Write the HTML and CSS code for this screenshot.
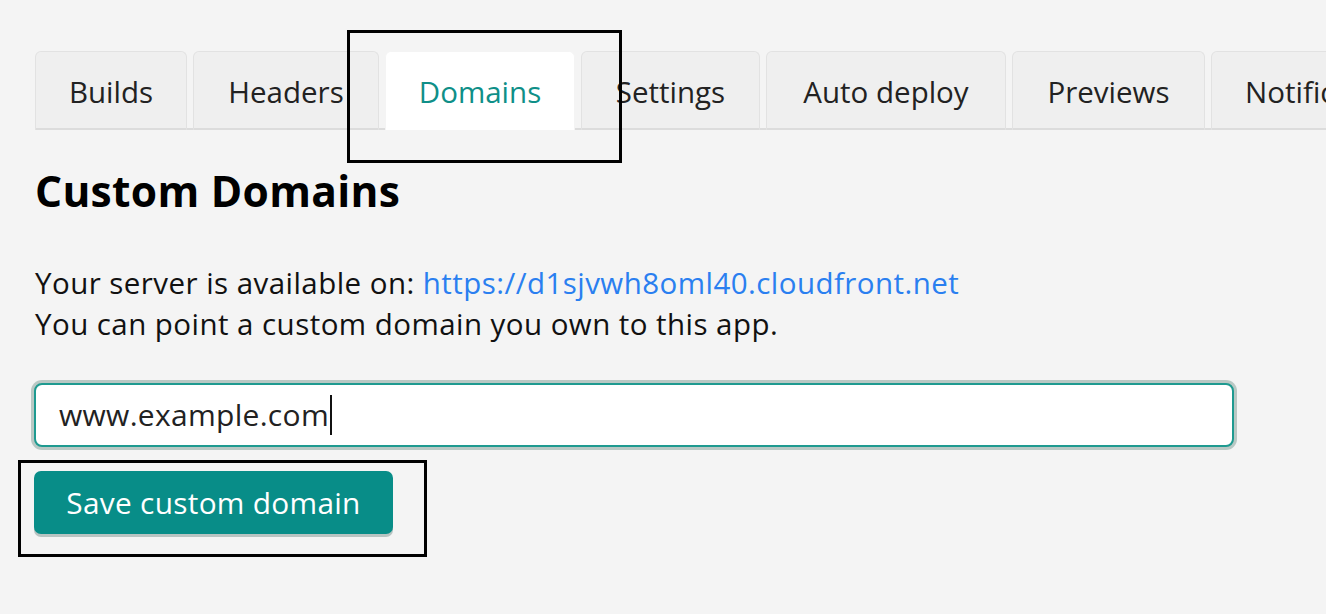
FILE: index.html
```html
<!DOCTYPE html>
<html>
<head>
<meta charset="utf-8">
<link rel="stylesheet" href="styles.css">
</head>
<body>
<div class="page">
  <nav class="tabs">
    <div class="tab tab-builds">Builds</div>
    <div class="tab tab-headers">Headers</div>
    <div class="tab tab-domains active">Domains</div>
    <div class="tab tab-settings">Settings</div>
    <div class="tab tab-auto">Auto deploy</div>
    <div class="tab tab-previews">Previews</div>
    <div class="tab tab-notif">Notifications</div>
  </nav>
  <h1 class="title">Custom Domains</h1>
  <p class="info">Your server is available on: <a class="link" href="#">https://d1sjvwh8oml40.cloudfront.net</a><br>You can point a custom domain you own to this app.</p>
  <div class="field"><span class="value">www.example.com</span><span class="caret"></span></div>
  <button class="save">Save custom domain</button>
</div>
<div class="mark mark-tab"></div>
<div class="mark mark-btn"></div>
</body>
</html>
```
FILE: styles.css
```css
html, body { margin: 0; padding: 0; }
body {
  background: #f4f4f4;
  font-family: "Open Sans", "Noto Sans", sans-serif;
  color: #111;
  width: 1326px;
  height: 614px;
  overflow: hidden;
  position: relative;
}
.page { padding: 51px 0 0 35px; }
.tabs {
  display: flex;
  gap: 6px;
  white-space: nowrap;
  height: 79px;
  box-shadow: inset 0 -2px 0 #dcdcdc;
  width: 1400px;
}
.tab {
  box-sizing: border-box;
  flex: none;
  height: 79px;
  display: flex;
  align-items: center;
  justify-content: center;
  padding-top: 1px;
  font-size: 29.5px;
  color: #222;
  background: #efefef;
  border: 1px solid #e2e2e2;
  border-bottom: none;
  border-radius: 6px 6px 0 0;
  box-shadow: inset 0 -2px 0 #dcdcdc;
}
.tab-builds { width: 152px; }
.tab-headers { width: 186px; }
.tab-domains { width: 190px; }
.tab-settings { width: 179px; }
.tab-auto { width: 240px; }
.tab-previews { width: 193px; }
.tab-notif { width: 220px; justify-content: flex-start; padding-left: 33px; }
.tab.active {
  background: #fff;
  color: #0f8f88;
  border-color: #f4f4f4;
  box-shadow: none;
}
.title {
  margin: 37px 0 0;
  font-size: 42.5px;
  font-weight: 700;
  line-height: 48px;
  color: #000;
  letter-spacing: 0.3px;
}
.info {
  margin: 47px 0 0;
  font-size: 29.5px;
  line-height: 41px;
  color: #111;
  letter-spacing: 0.45px;
}
.link { color: #2a7ff0; text-decoration: none; }
.field {
  box-sizing: border-box;
  margin: 39px 0 0 -1px;
  width: 1200px;
  height: 64px;
  background: #fff;
  border: 2px solid #1e9a90;
  border-radius: 8px;
  box-shadow: 0 0 0 3px #b9c8c4;
  display: flex;
  align-items: center;
  padding: 0 0 2px 23px;
  font-size: 30px;
  color: #222;
  letter-spacing: 0.3px;
}
.caret { display: inline-block; width: 2px; height: 40px; background: #111; margin-left: 1px; margin-top: 2px; }
.save {
  display: block;
  margin: 24px 0 0 -1px;
  height: 63px;
  width: 359px;
  padding: 0 0 1px;
  border: none;
  border-radius: 7px;
  background: #088d88;
  color: #fff;
  font-family: inherit;
  font-size: 29.8px;
  letter-spacing: 0.3px;
  box-shadow: 0 3px 0 #b8c4c2;
}
.mark { position: absolute; border: 3px solid #000; box-sizing: border-box; }
.mark-tab { left: 347px; top: 30px; width: 275px; height: 133px; }
.mark-btn { left: 18px; top: 460px; width: 409px; height: 97px; }
```
